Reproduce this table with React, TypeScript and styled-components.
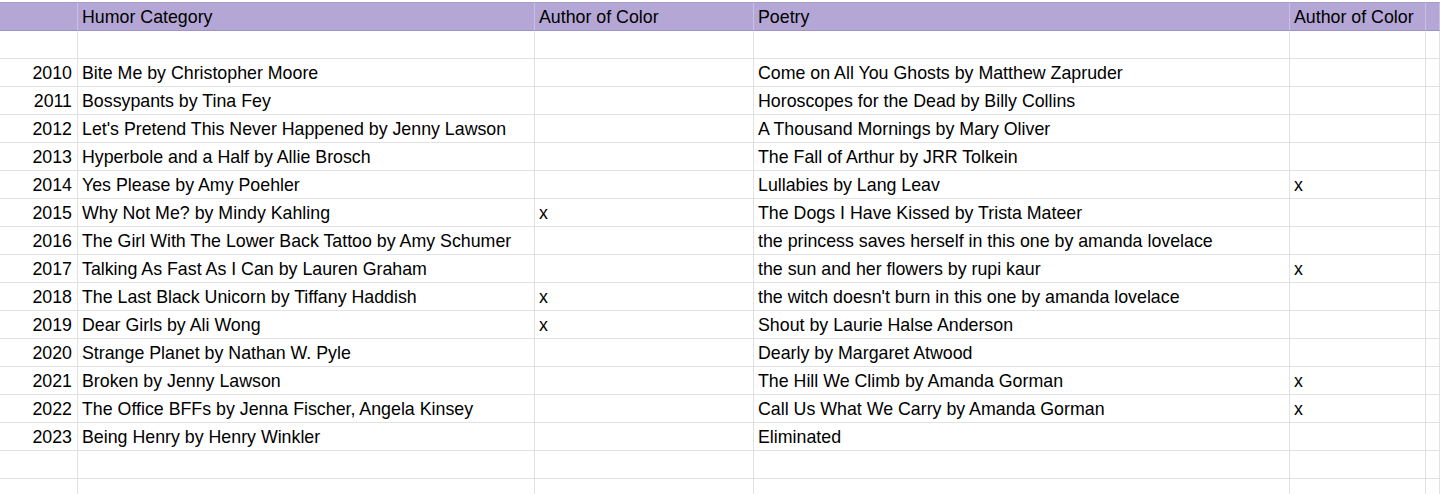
import React from 'react';
import styled, {createGlobalStyle} from 'styled-components';

const GlobalStyle = createGlobalStyle`
  html, body {
    margin: 0;
    padding: 0;
    background: white;
    overflow: hidden;
  }
  body {
    font-family: "Liberation Sans", Arial, sans-serif;
    color: #000;
  }
`;

const Sheet = styled.div`
  padding-top: 2px;
  display: grid;
  grid-template-columns: 78px 457px 219px 536px 136px 1fr;
  grid-template-rows: 29px;
  grid-auto-rows: 28px;
  font-size: 17.8px;
`;

const Cell = styled.div<{header?: boolean; right?: boolean}>`
  box-sizing: border-box;
  height: ${p => (p.header ? 29 : 28)}px;
  line-height: 29px;
  padding: 0 5px 0 4px;
  white-space: nowrap;
  overflow: visible;
  text-align: ${p => (p.right ? 'right' : 'left')};
  background: ${p => (p.header ? '#b4a7d6' : 'white')};
  border-right: 1px solid ${p => (p.header ? '#c9c0e3' : '#e2e2e2')};
  border-bottom: 1px solid ${p => (p.header ? '#9e93c2' : '#e2e2e2')};
  border-top: ${p => (p.header ? '1px solid #a89dc9' : 'none')};
`;

type Row = [string, string, string, string, string];

const rows: Row[] = [
  ['', '', '', '', ''],
  ['2010', 'Bite Me by Christopher Moore', '', 'Come on All You Ghosts by Matthew Zapruder', ''],
  ['2011', 'Bossypants by Tina Fey', '', 'Horoscopes for the Dead by Billy Collins', ''],
  ['2012', "Let's Pretend This Never Happened by Jenny Lawson", '', 'A Thousand Mornings by Mary Oliver', ''],
  ['2013', 'Hyperbole and a Half by Allie Brosch', '', 'The Fall of Arthur by JRR Tolkein', ''],
  ['2014', 'Yes Please by Amy Poehler', '', 'Lullabies by Lang Leav', 'x'],
  ['2015', 'Why Not Me? by Mindy Kahling', 'x', 'The Dogs I Have Kissed by Trista Mateer', ''],
  ['2016', 'The Girl With The Lower Back Tattoo by Amy Schumer', '', 'the princess saves herself in this one by amanda lovelace', ''],
  ['2017', 'Talking As Fast As I Can by Lauren Graham', '', 'the sun and her flowers by rupi kaur', 'x'],
  ['2018', 'The Last Black Unicorn by Tiffany Haddish', 'x', "the witch doesn't burn in this one by amanda lovelace", ''],
  ['2019', 'Dear Girls by Ali Wong', 'x', 'Shout by Laurie Halse Anderson', ''],
  ['2020', 'Strange Planet by Nathan W. Pyle', '', 'Dearly by Margaret Atwood', ''],
  ['2021', 'Broken by Jenny Lawson', '', 'The Hill We Climb by Amanda Gorman', 'x'],
  ['2022', 'The Office BFFs by Jenna Fischer, Angela Kinsey', '', 'Call Us What We Carry by Amanda Gorman', 'x'],
  ['2023', 'Being Henry by Henry Winkler', '', 'Eliminated', ''],
  ['', '', '', '', ''],
  ['', '', '', '', ''],
];

const headers = ['', 'Humor Category', 'Author of Color', 'Poetry', 'Author of Color', ''];

export default function App() {
  return (
    <>
      <GlobalStyle/>
      <Sheet>
        {headers.map((h, i) => (
          <Cell key={'h' + i} header>{h}</Cell>
        ))}
        {rows.map((row, r) => (
          <React.Fragment key={r}>
            {row.map((v, c) => (
              <Cell key={c} right={c === 0}>{v}</Cell>
            ))}
            <Cell/>
          </React.Fragment>
        ))}
      </Sheet>
    </>
  );
}
